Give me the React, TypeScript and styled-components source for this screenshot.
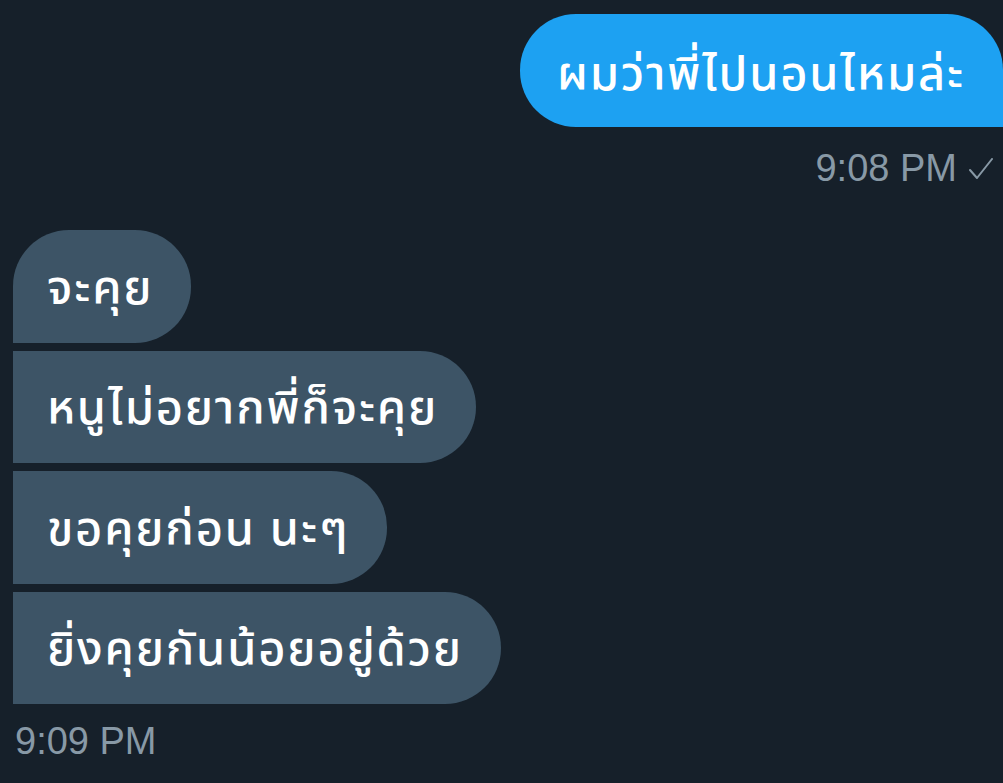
import React from "react";
import styled, { createGlobalStyle } from "styled-components";

const Global = createGlobalStyle`
  html, body { margin: 0; padding: 0; background: #16202a; }
  body { font-family: "Liberation Sans", "Noto Sans", sans-serif; }
`;

const Screen = styled.div`
  width: 1003px;
  height: 783px;
  overflow: hidden;
  background: #16202a;
  display: flex;
  flex-direction: column;
  padding-top: 14px;
  box-sizing: border-box;
`;

const SentGroup = styled.div`
  display: flex;
  flex-direction: column;
  align-items: flex-end;
`;

const ReceivedGroup = styled.div`
  display: flex;
  flex-direction: column;
  align-items: flex-start;
  gap: 8px;
  padding-left: 13px;
  margin-top: 40px;
`;

const Bubble = styled.div<{ $sent?: boolean; $radius: string }>`
  box-sizing: border-box;
  height: ${(p) => (p.$sent ? "113px" : "112.5px")};
  display: flex;
  align-items: center;
  padding: ${(p) => (p.$sent ? "10px" : "6px")} 38px 0 ${(p) => (p.$sent ? "37px" : "34px")};
  background: ${(p) => (p.$sent ? "#1da1f2" : "#3d5466")};
  color: #ffffff;
  border-radius: ${(p) => p.$radius};
  font-family: "Noto Sans Thai", "Noto Sans", "DejaVu Sans", sans-serif;
  font-size: 47px;
  font-weight: 500;
  letter-spacing: 1.8px;
  white-space: nowrap;
`;

const Stamp = styled.div<{ $sent?: boolean }>`
  display: flex;
  align-items: center;
  gap: 12px;
  color: #8899a6;
  font-family: "Liberation Sans", Arial, sans-serif;
  font-size: 38px;
  margin-top: ${(p) => (p.$sent ? "20px" : "16px")};
  padding: ${(p) => (p.$sent ? "0 10px 0 0" : "0 0 0 15px")};
`;

const Check = () => (
  <svg width="24" height="22" viewBox="0 0 24 22" fill="none">
    <path d="M1 12 L8 20 L23 1" stroke="#8899a6" strokeWidth="2" strokeLinecap="round" strokeLinejoin="round" />
  </svg>
);

const received = [
  { text: "จะคุย", radius: "56px 56px 56px 0" },
  { text: "หนูไม่อยากพี่ก็จะคุย", radius: "0 56px 56px 0" },
  { text: "ขอคุยก่อน นะๆ", radius: "0 56px 56px 0" },
  { text: "ยิ่งคุยกันน้อยอยู่ด้วย", radius: "0 56px 56px 0" },
];

export default function App() {
  return (
    <>
      <Global />
      <Screen>
        <SentGroup>
          <Bubble $sent $radius="56px 56px 0 56px">ผมว่าพี่ไปนอนไหมล่ะ</Bubble>
          <Stamp $sent>
            <span>9:08 PM</span>
            <Check />
          </Stamp>
        </SentGroup>
        <ReceivedGroup>
          {received.map((m, i) => (
            <Bubble key={i} $radius={m.radius}>
              {m.text}
            </Bubble>
          ))}
        </ReceivedGroup>
        <Stamp>9:09 PM</Stamp>
      </Screen>
    </>
  );
}
